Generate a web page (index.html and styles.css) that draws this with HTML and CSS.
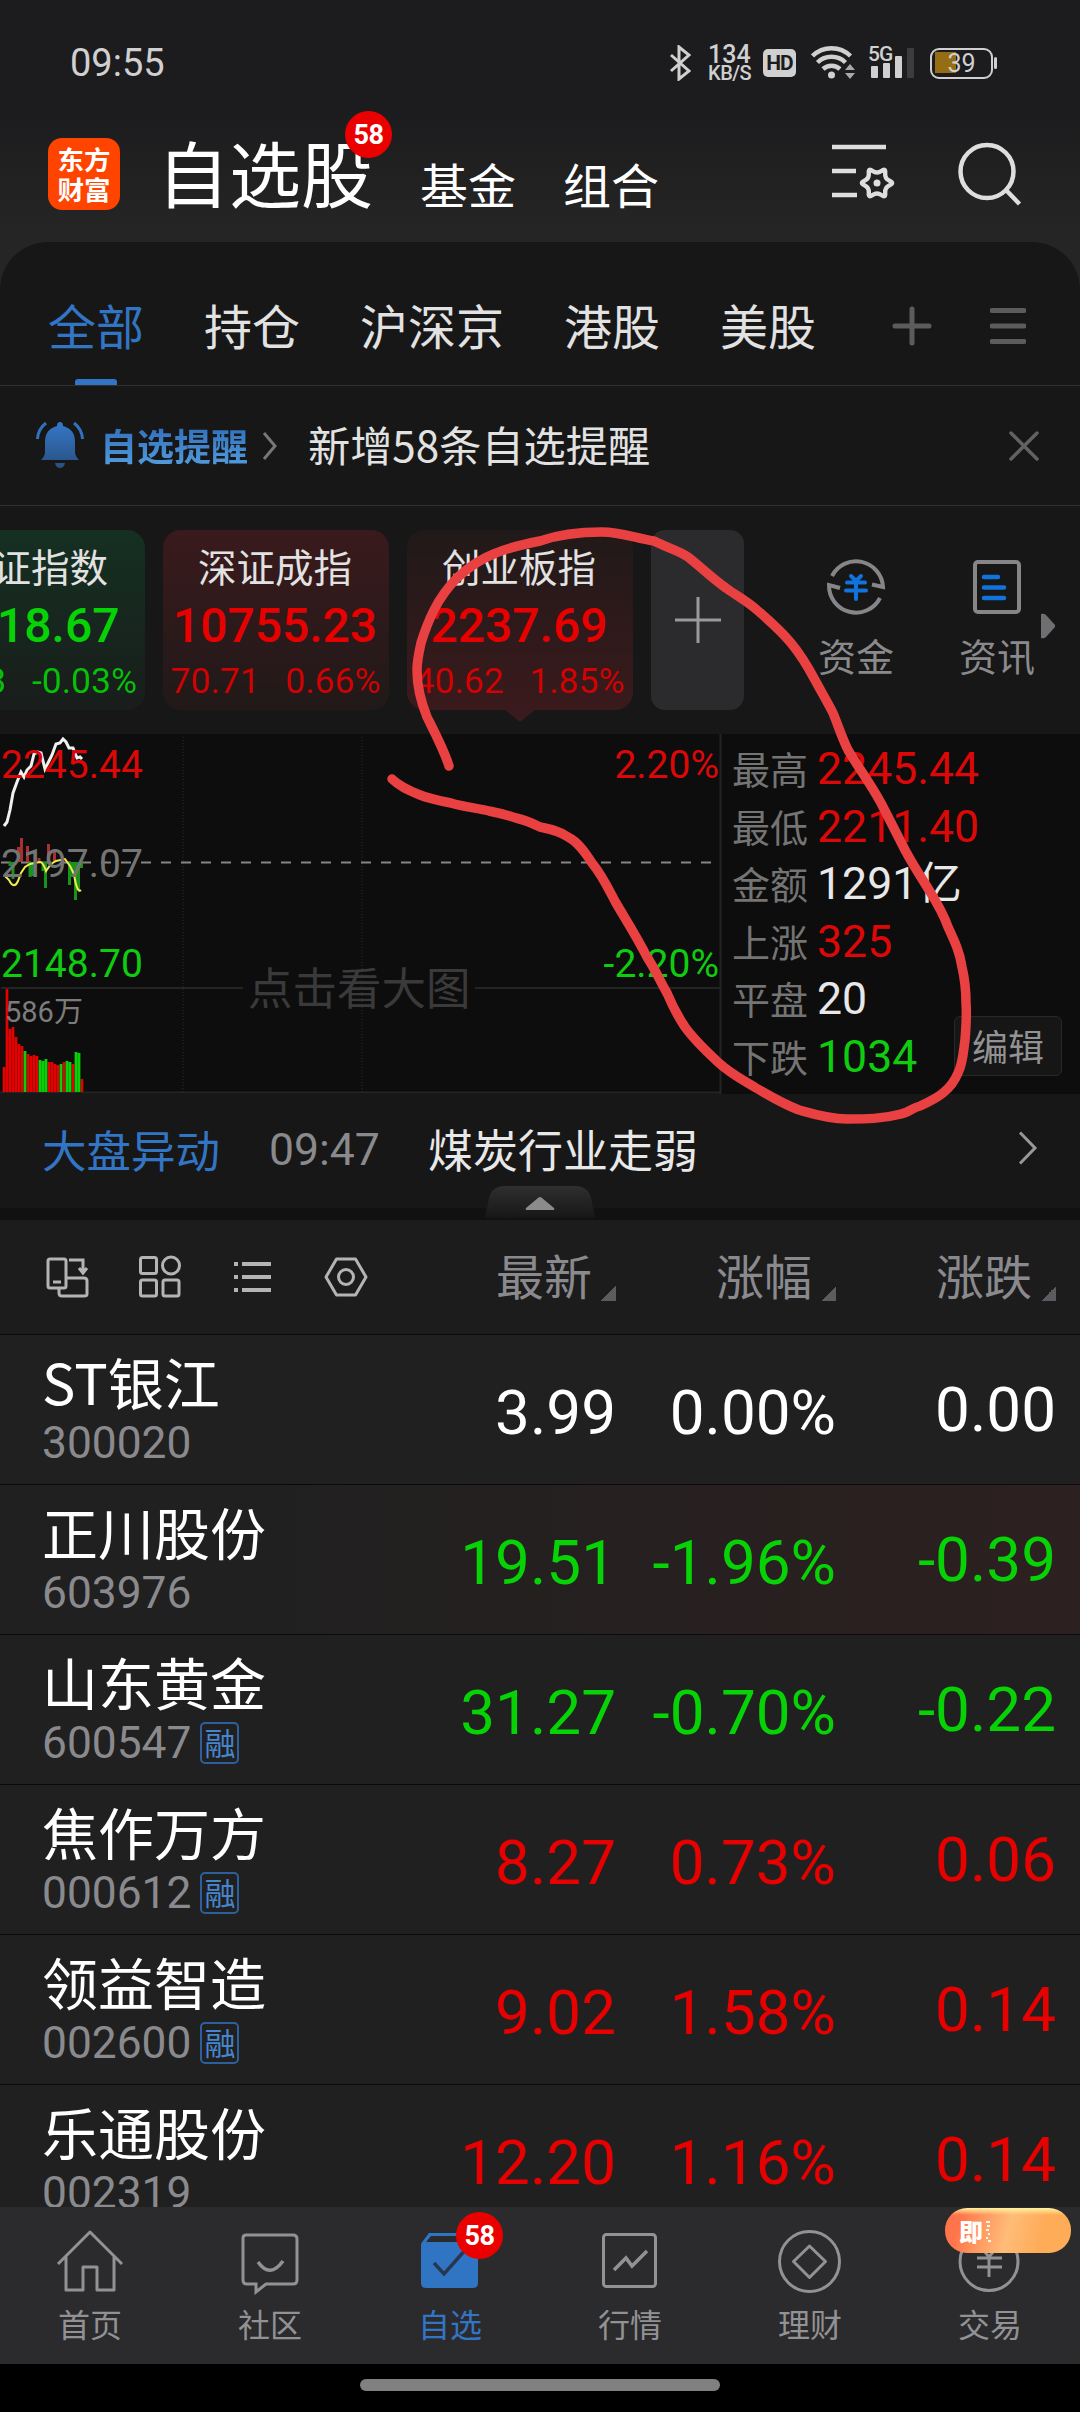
FILE: index.html
```html
<!DOCTYPE html>
<html lang="zh-CN">
<head>
    <meta charset="UTF-8">
    <meta name="viewport" content="width=device-width, initial-scale=1.0">
    <title>自选股</title>
    <link rel="stylesheet" href="styles.css">
</head>
<body>
    <div class="top">
        <div class="status-bar">
            <span class="time">09:55</span>
            <div class="status-icons">
                <svg class="bluetooth" width="22" height="36" viewBox="0 0 22 36" fill="none" stroke="#d0d0d0" stroke-width="3"><path d="M2 10l18 16-10 8V2l10 8L2 26"/></svg>
                <div class="speed"><span>134</span><span class="unit">KB/S</span></div>
                <div class="hd">HD</div>
                <svg class="wifi" width="46" height="36" viewBox="0 0 46 36" fill="none" stroke="#d0d0d0" stroke-width="4.5"><path d="M1.500 12a27 27 0 0 1 38 0M6.500 18.500a20 20 0 0 1 28 0M12 25a12.500 12.500 0 0 1 17 0"/><circle cx="20.500" cy="31" r="3.500" fill="#d0d0d0" stroke="none"/><path d="M34 26l5-6 5 6zM34 29h10l-5 6z" fill="#a8a8a8" stroke="none"/></svg>
                <div class="signal">
                    <span class="net">5G</span>
                    <svg width="46" height="34" viewBox="0 0 46 34" fill="#d0d0d0"><rect x="2" y="20" width="7" height="12" rx="1"/><rect x="14" y="17" width="7" height="15" rx="1"/><rect x="26" y="10" width="7" height="22" rx="1"/><rect x="38" y="2" width="7" height="30" rx="1" fill="#3c3c3e"/></svg>
                </div>
                <div class="battery"><span>39</span></div>
            </div>
        </div>
        <div class="header">
            <div class="logo">东方<br>财富</div>
            <div class="title">自选股<span class="badge">58</span></div>
            <div class="link">基金</div>
            <div class="link">组合</div>
            <div class="header-icons">
                <svg width="66" height="62" viewBox="0 0 66 62" fill="none" stroke="#dedede" stroke-width="4.500"><path d="M1 6h54M1 30h24M1 54h25"/><path transform="translate(46 42) scale(.88)" stroke-width="5" d="M14.300 2.500Q8.700 5 9.300 11.200 10 17.300 5 13.700 0 10-5 13.700-10 17.300-9.300 11.200-8.700 5-14.300 2.500-20 0-14.300-2.500-8.700-5-9.300-11.200-10-17.300-5-13.700 0-10 5-13.700 10-17.300 9.300-11.200 8.700-5 14.300-2.500 20 0 14.300 2.500z"/><circle cx="46" cy="42" r="3.500" fill="#dedede" stroke="none"/></svg>
                <svg width="66" height="66" viewBox="0 0 66 66" fill="none" stroke="#dedede" stroke-width="4.500"><circle cx="29" cy="30.500" r="26.500"/><path d="M48 49l13.500 14"/></svg>
            </div>
        </div>
    </div>

    <div class="panel">
        <div class="tabs">
            <span class="tab active">全部</span>
            <span class="tab">持仓</span>
            <span class="tab">沪深京</span>
            <span class="tab">港股</span>
            <span class="tab">美股</span>
            <svg class="tab-plus" width="40" height="40" viewBox="0 0 40 40" stroke="#5c5c5c" stroke-width="5" stroke-linecap="round"><path d="M3 20h34M20 3v34"/></svg>
            <svg width="36" height="40" viewBox="0 0 36 40" stroke="#5c5c5c" stroke-width="5" stroke-linecap="round"><path d="M2 4.500h32M2 20h32M2 35.500h32"/></svg>
        </div>

        <div class="notice">
            <svg class="bell" width="50" height="50" viewBox="0 0 50 50">
                <defs><linearGradient id="bell" x1="0" y1="0" x2="0" y2="1"><stop offset="0" stop-color="#3578c8"/><stop offset="1" stop-color="#285080"/></linearGradient></defs>
                <path d="M25 3q3 0 3 4 12 3 12 16v10q0 4 4 8H6q4-4 4-8V23Q10 10 22 7q0-4 3-4zM20 44h10q-1 5-5 5t-5-5z" fill="url(#bell)"/>
                <path d="M11 4Q3 10 2.500 20M39 4q8 6 8.500 16" fill="none" stroke="#3272bd" stroke-width="3"/>
            </svg>
            <span class="notice-title">自选提醒</span>
            <svg width="16" height="30" viewBox="0 0 16 30" fill="none" stroke="#77777a" stroke-width="3"><path d="M2 2l11 13L2 28"/></svg>
            <span class="notice-text">新增58条自选提醒</span>
            <svg class="close" width="32" height="32" viewBox="0 0 32 32" stroke="#626262" stroke-width="3.500" stroke-linecap="round"><path d="M3 3l26 26M29 3L3 29"/></svg>
        </div>

        <div class="indices">
            <div class="card down">
                <div class="card-name">上证指数</div>
                <div class="card-value">3218.67</div>
                <div class="card-change"><span>-0.98</span><span>-0.03%</span></div>
            </div>
            <div class="card up">
                <div class="card-name">深证成指</div>
                <div class="card-value">10755.23</div>
                <div class="card-change"><span>70.71</span><span>0.66%</span></div>
            </div>
            <div class="card up selected">
                <div class="card-name">创业板指</div>
                <div class="card-value">2237.69</div>
                <div class="card-change"><span>40.62</span><span>1.85%</span></div>
            </div>
            <div class="card-add"><svg width="46" height="46" viewBox="0 0 46 46" stroke="#9a9a9c" stroke-width="3"><path d="M0 23h46M23 0v46"/></svg></div>
            <div class="tool">
                <svg width="60" height="60" viewBox="0 0 60 60" fill="none" stroke="#868688" stroke-width="4"><path d="M6 19a27 27 0 0 1 51 11l-11-2.500M54 41A27 27 0 0 1 3 28l11 3"/><path d="M25 19l5 5 5-5M21 25.500h18M20 33.500h20M30 24v18" stroke="#1173dc" stroke-linecap="round"/></svg>
                <span>资金</span>
            </div>
            <div class="tool tool-news">
                <svg width="50" height="60" viewBox="0 0 50 60" fill="none" stroke="#868688" stroke-width="4"><rect x="3" y="5" width="44" height="50" rx="3"/><path d="M12 20h14M12 30.500h20M12 41h20" stroke="#1173dc" stroke-width="4.500" stroke-linecap="round"/></svg>
                <span>资讯</span>
            </div>
            <svg class="more" width="16" height="26" viewBox="0 0 16 26" fill="#6f6f71"><path d="M1 1q3-1 5 1l9 10v2L6 24q-2 2-5 1z"/></svg>
        </div>

        <div class="market">
            <svg class="chart" width="722" height="360" viewBox="0 0 722 360">
                <g stroke="#242424" stroke-width="2" fill="none">
                    <path d="M183 3v355M362 3v355" stroke="#1d1d1d" stroke-dasharray="1 2"/>
                    <path d="M1 254h242M475 254h246M0 358.500h721M720.500 0v360"/>
                </g>
                <path d="M1 128.500h714" stroke="#858585" stroke-width="2" stroke-dasharray="10 10"/>
                <!-- volume -->
                <path d="M4 358V333M7 358V255M10 358V295M13 358V293M16 358V303M19 358V310M22 358V312M28 358V320M31 358V322M34 358V321M37 358V322M49 358V328M52 358V328M55 358V330M58 358V331M64 358V328M73 358V330M82 358V345" stroke="#e60000" stroke-width="2.700"/>
                <path d="M25 358V317M40 358V326M43 358V327M46 358V325M61 358V330M67 358V327M70 358V328M76 358V318M79 358V319" stroke="#06d206" stroke-width="2.800"/>
                <!-- momentum bars -->
                <path d="M18.500 128V113M21.500 128V104M27.500 128V112M39 128V124M48.500 128V110M54.500 128V118" stroke="#a93030" stroke-width="3"/>
                <path d="M10 128v4M13 128v17M30 128v15M33 128v14M43 128v9M45.500 128v26M69.500 128v23M72.500 128v15M75.500 128v38M78.500 128v28M81.500 128v6" stroke="#199319" stroke-width="3"/>
                <path d="M4 92l3-4 3-12 3-17 4-11 4-10 3 5 3-7 4-4 3-12 4-2 3 1 4 16 3-6 4-8 4-11 4-1 3-4 3 3 3 6 4 0 4 10 3-1 2 2" fill="none" stroke="#f0f0f0" stroke-width="3"/>
                <path d="M4 141l5 5q5 10 9 1l3-8 4-6 5-3 10-2q3 0 6 9l5-7 5-3 9-2 5 7 4 8q3 20 7 16" fill="none" stroke="#f2ea4c" stroke-width="2"/>
                <g class="axis">
                    <text x="1" y="44" class="t-up">2245.44</text>
                    <text x="1" y="143" class="t-mid">2197.07</text>
                    <text x="1" y="243" class="t-down">2148.70</text>
                    <text x="719" y="44" text-anchor="end" class="t-up">2.20%</text>
                    <text x="719" y="243" text-anchor="end" class="t-down">-2.20%</text>
                    <text x="5" y="288" class="t-vol">586万</text>
                </g>
                <text x="248" y="271" class="hint">点击看大图</text>
            </svg>
            <div class="stats">
                <div class="stat"><span>最高</span><b class="t-up">2245.44</b></div>
                <div class="stat"><span>最低</span><b class="t-up">2211.40</b></div>
                <div class="stat"><span>金额</span><b>1291亿</b></div>
                <div class="stat"><span>上涨</span><b class="t-up">325</b></div>
                <div class="stat"><span>平盘</span><b>20</b></div>
                <div class="stat"><span>下跌</span><b class="t-down">1034</b></div>
                <div class="edit">编辑</div>
            </div>
        </div>

        <div class="news">
            <span class="news-tag">大盘异动</span>
            <span class="news-time">09:47</span>
            <span class="news-text">煤炭行业走弱</span>
            <svg class="news-arrow" width="20" height="34" viewBox="0 0 20 34" fill="none" stroke="#98989a" stroke-width="3"><path d="M2 1.500l15 15.500L2 32.500"/></svg>
            <svg class="handle" width="110" height="32" viewBox="0 0 110 32">
                <defs><linearGradient id="tab" x1="0" y1="0" x2="0" y2="1"><stop offset="0" stop-color="#2f2f2f"/><stop offset="1" stop-color="#171717"/></linearGradient></defs>
                <path d="M0 32L4 12Q7 0 20 0h70q13 0 16 12l4 20z" fill="url(#tab)"/>
                <path d="M55 11q1 0 2 1l12 10q1 2-1 2H42q-2 0-1-2l12-10q1-1 2-1z" fill="#8b8b8b"/>
            </svg>
        </div>
    </div>

    <div class="table-head">
        <div class="views">
            <svg width="44" height="44" viewBox="0 0 44 44" fill="none" stroke="#b4b4b4" stroke-width="3"><rect x="3" y="4" width="18" height="29" rx="2"/><path d="M8 27h8M24 5h14v12M34 13l4 5 4-5M21 23h18q3 0 3 3v13q0 2-3 2H17q-3 0-3-3v-4"/></svg>
            <svg width="44" height="44" viewBox="0 0 44 44" fill="none" stroke="#b4b4b4" stroke-width="3"><rect x="2.500" y="2.500" width="16" height="16" rx="2"/><circle cx="33" cy="10.500" r="8.500"/><rect x="2.500" y="25" width="16" height="16" rx="2"/><rect x="25" y="25" width="16" height="16" rx="2"/></svg>
            <svg width="44" height="44" viewBox="0 0 44 44" fill="none" stroke="#b4b4b4" stroke-width="4"><path d="M3 9h4M11 9h29M3 22h4M11 22h29M3 35h4M11 35h29"/></svg>
            <svg width="44" height="44" viewBox="0 0 44 44" fill="none" stroke="#b4b4b4" stroke-width="3" stroke-linejoin="round"><path d="M12.500 4h19l10.500 18-10.500 18h-19L2 22z"/><circle cx="22" cy="22" r="7.500"/></svg>
        </div>
        <div class="col">最新<i></i></div>
        <div class="col">涨幅<i></i></div>
        <div class="col">涨跌<i></i></div>
    </div>

    <div class="list">
        <div class="row">
            <div class="stock"><div class="name">ST银江</div><div class="code">300020</div></div>
            <div class="num">3.99</div><div class="num">0.00%</div><div class="num diff">0.00</div>
        </div>
        <div class="row flash fall">
            <div class="stock"><div class="name">正川股份</div><div class="code">603976</div></div>
            <div class="num">19.51</div><div class="num">-1.96%</div><div class="num diff">-0.39</div>
        </div>
        <div class="row fall">
            <div class="stock"><div class="name">山东黄金</div><div class="code">600547<em>融</em></div></div>
            <div class="num">31.27</div><div class="num">-0.70%</div><div class="num diff">-0.22</div>
        </div>
        <div class="row rise">
            <div class="stock"><div class="name">焦作万方</div><div class="code">000612<em>融</em></div></div>
            <div class="num">8.27</div><div class="num">0.73%</div><div class="num diff">0.06</div>
        </div>
        <div class="row rise">
            <div class="stock"><div class="name">领益智造</div><div class="code">002600<em>融</em></div></div>
            <div class="num">9.02</div><div class="num">1.58%</div><div class="num diff">0.14</div>
        </div>
        <div class="row rise">
            <div class="stock"><div class="name">乐通股份</div><div class="code">002319</div></div>
            <div class="num">12.20</div><div class="num">1.16%</div><div class="num diff">0.14</div>
        </div>
    </div>

    <div class="nav">
        <div class="nav-item">
            <svg width="68" height="68" viewBox="0 0 68 68" fill="none" stroke="#929295" stroke-width="3"><path d="M2 37L34 5l32 32M10 30v33h17V40h14v23h17V30" stroke-linejoin="round"/></svg>
            <span>首页</span>
        </div>
        <div class="nav-item">
            <svg width="68" height="68" viewBox="0 0 68 68" fill="none" stroke="#929295" stroke-width="3"><path d="M10 8h47q4 0 4 4v41q0 4-4 4H30l-10 8v-8h-9q-4 0-4-4V11q0-3 3-3z"/><path d="M22 35q12 17 25-1" stroke-width="3.500"/></svg>
            <span>社区</span>
        </div>
        <div class="nav-item current">
            <svg width="68" height="68" viewBox="0 0 68 68"><path d="M5 18q0-2 2-4l6-8h42l7 10v40q0 5-5 5H10q-5 0-5-5zM10 15h47l-5-6H15z" fill="#3075c4" fill-rule="evenodd"/><path d="M18 36l10 11 23-26" fill="none" stroke="#263850" stroke-width="3.500"/></svg>
            <span>自选</span>
            <span class="badge">58</span>
        </div>
        <div class="nav-item">
            <svg width="68" height="68" viewBox="0 0 68 68" fill="none" stroke="#929295" stroke-width="3"><rect x="7.500" y="7.500" width="52" height="52" rx="3"/><path d="M18 43l12-12 6 8 15-15" stroke-width="3.500"/></svg>
            <span>行情</span>
        </div>
        <div class="nav-item">
            <svg width="68" height="68" viewBox="0 0 68 68" fill="none" stroke="#929295" stroke-width="3"><circle cx="33.500" cy="34.500" r="30"/><path d="M33.500 19l16 15.500-16 16-16-16z" stroke-linejoin="round"/></svg>
            <span>理财</span>
        </div>
        <div class="nav-item">
            <svg width="68" height="68" viewBox="0 0 68 68" fill="none" stroke="#929295" stroke-width="3"><circle cx="33" cy="34.500" r="29"/><path d="M24 19l9 11 9-11M21 31h25M21 40h25M33 30v20"/></svg>
            <span>交易</span>
            <div class="promo"><span>即</span><svg width="6" height="22" viewBox="0 0 6 22" stroke="#fff5ea" stroke-width="2"><path d="M1 2h4M2 6h3M1 10h3M3 14h2M1 18h2M3 21h3"/></svg></div>
        </div>
    </div>
    <div class="home-bar"><div></div></div>

    <!-- freehand marker drawn over the page -->
    <svg class="marker" width="1080" height="2412" viewBox="0 0 1080 2412">
        <path d="M449 766C444 750 435 733 427 717C421 702 417 686 417 670C417 662 419 652 421 643C425 630 429 620 434 610C440 598 448 587 458 577C470 566 483 558 496 553C510 547 525 544 540 541C560 534 580 532 602 532C620 532 635 538 654 541C668 548 680 551 688 557C702 568 713 579 726 588C737 596 747 601 757 610C771 622 782 632 791 643C801 655 808 667 815 680C822 693 828 703 833 713C838 725 842 738 848 750C858 767 870 783 881 803L905 850C913 865 921 877 929 890C937 903 944 915 948 927C955 942 960 953 962 967C965 980 966 990 966 1003C967 1016 966 1028 965 1040C963 1054 963 1063 958 1073C951 1090 938 1098 920 1106C912 1108 908 1113 901 1114C882 1119 866 1119 847 1119C829 1119 813 1114 799 1110C783 1104 770 1096 756 1088C743 1080 731 1074 719 1063C706 1051 695 1041 685 1027C677 1015 672 1005 667 993C660 981 655 969 647 957C637 937 626 920 616 903C608 888 602 875 592 863C585 852 578 842 568 837C560 831 550 829 540 827C532 823 525 820 516 818C507 815 499 813 489 811C477 808 464 807 451 803C441 801 430 799 420 795C408 790 399 786 392 779"/>
    </svg>
</body>
</html>
```
FILE: styles.css
```css
* {
    margin: 0;
    padding: 0;
    box-sizing: border-box;
}
body {
    width: 1080px;
    height: 2412px;
    overflow: hidden;
    position: relative;
    background: #000;
    color: #e2e2e2;
    font-family: "Noto Sans CJK SC", sans-serif;
    display: flex;
    flex-direction: column;
}
svg {
    display: block;
    flex-shrink: 0;
}

/* status bar and title */
.top {
    height: 290px;
    margin-bottom: -48px;
    background: linear-gradient(#1c1c1e 110px, #252525 230px);
}
.status-bar {
    height: 126px;
    padding: 0 87px 0 70px;
    display: flex;
    align-items: center;
    justify-content: space-between;
    font-family: Roboto, sans-serif;
    color: #d0d0d0;
}
.time {
    font-size: 38px;
}
.status-icons {
    display: flex;
    align-items: center;
}
.speed {
    display: flex;
    flex-direction: column;
    width: 43px;
    margin-left: 17px;
    font-size: 25px;
    line-height: 19px;
    font-weight: 500;
}
.speed .unit {
    font-size: 20px;
    line-height: 18px;
    letter-spacing: -0.5px;
}
.hd {
    width: 33px;
    height: 28px;
    margin-left: 12px;
    border-radius: 5px;
    background: #d0d0d0;
    color: #1c1c1e;
    font-size: 21px;
    line-height: 28px;
    font-weight: 700;
    text-align: center;
    letter-spacing: -1px;
}
.wifi {
    margin: -3px 0 0 15px;
}
.signal {
    position: relative;
    margin-left: 12px;
}
.net {
    position: absolute;
    left: -1px;
    top: 0;
    font-size: 21px;
    line-height: 16px;
    font-weight: 500;
    letter-spacing: -1px;
}
.battery {
    position: relative;
    width: 63px;
    height: 31px;
    margin-left: 15px;
    border: 2.5px solid #d0d0d0;
    border-radius: 9px;
    font-size: 25px;
    line-height: 27px;
    text-align: center;
    background: linear-gradient(90deg, #946d14 21px, transparent 21px) 3px 2.5px / 53px 21px no-repeat;
}
.battery::after {
    content: "";
    position: absolute;
    right: -6px;
    top: 7px;
    width: 3px;
    height: 12px;
    border-radius: 2px;
    background: #d0d0d0;
}
.header {
    height: 116px;
    padding: 0 56px 0 48px;
    display: flex;
    align-items: flex-start;
}
.logo {
    width: 72px;
    height: 72px;
    margin-top: 12px;
    padding-top: 6px;
    border-radius: 14px;
    background: #ff4400;
    color: #fff;
    font-size: 26.500px;
    line-height: 30px;
    font-weight: 700;
    text-align: center;
}
.title {
    position: relative;
    margin-left: 37px;
    color: #fff;
    font-size: 72px;
    line-height: 90px;
}
.badge {
    position: absolute;
    left: 188px;
    top: -15px;
    width: 47px;
    height: 47px;
    border-radius: 50%;
    background: #eb0000;
    color: #fff;
    font-family: Roboto, sans-serif;
    font-size: 27px;
    line-height: 48px;
    font-weight: 700;
    text-align: center;
    letter-spacing: -0.5px;
}
.link {
    margin-left: 47px;
    color: #fff;
    font-size: 48px;
    line-height: 60px;
    padding-top: 27px;
}
.header-icons {
    display: flex;
    gap: 61px;
    margin: 15px 0 0 auto;
}

/* rounded dark panel */
.panel {
    background: #171717;
    border-radius: 48px 48px 0 0;
    height: 978px;
    position: relative;
}
.tabs {
    height: 144px;
    padding: 24px 54px 0 48px;
    border-bottom: 1px solid #303030;
    display: flex;
    align-items: center;
    gap: 60px;
    font-size: 48px;
}
.tab {
    height: 119px;
    line-height: 116px;
    position: relative;
}
.tab.active {
    color: #3275c4;
}
.tab.active::after {
    content: "";
    position: absolute;
    left: 27px;
    bottom: 0;
    width: 42px;
    height: 6px;
    border-radius: 3px 3px 0 0;
    background: #3275c4;
}
.tab-plus {
    margin: 0 -2px 0 auto;
}
.notice {
    height: 120px;
    padding: 0 40px 0 35px;
    border-bottom: 1px solid #303030;
    display: flex;
    align-items: center;
}
.bell {
    margin-top: -4px;
}
.notice-title {
    margin: -2px 14px 0 15px;
    font-size: 37px;
    line-height: 50px;
    font-weight: 700;
    background: linear-gradient(#2b69b8, #55a0e0);
    -webkit-background-clip: text;
    background-clip: text;
    color: transparent;
}
.notice-text {
    margin: -4px 0 0 30px;
    font-size: 42.200px;
}
.close {
    margin-left: auto;
}
.indices {
    height: 228px;
    padding-top: 24px;
    display: flex;
    overflow: hidden;
}
.card {
    flex: 0 0 226px;
    height: 180px;
    margin-right: 18px;
    border-radius: 18px;
    text-align: center;
    position: relative;
}
.card:first-child {
    margin-left: -81px;
}
.card-name {
    font-size: 38.500px;
    line-height: 50px;
    padding: 10px 2px 0 0;
}
.card-value {
    font-family: Roboto, sans-serif;
    font-size: 48px;
    line-height: 60px;
    font-weight: 500;
    margin-top: 6px;
    padding-right: 2px;
}
.card-change {
    display: flex;
    justify-content: space-between;
    padding: 0 8px;
    font-family: Roboto, sans-serif;
    font-size: 35.500px;
    line-height: 50px;
}
.card.up {
    background: linear-gradient(#3a1a1c, #211919);
    color: #e60000;
}
.card.down {
    background: linear-gradient(#153022, #191d1b);
    color: #06d206;
}
.card.selected {
    background: linear-gradient(#211919, #3a1a1c);
}
.card.selected::after {
    content: "";
    position: absolute;
    left: 98px;
    top: 180px;
    border: 15px solid transparent;
    border-top: 12px solid #3a1a1c;
    border-bottom: 0;
}
.card .card-name {
    color: #e2e2e2;
}
.card-change {
    opacity: 0.9;
}
.card-add {
    flex: 0 0 93px;
    height: 180px;
    border-radius: 14px;
    background: #2b2b2d;
    display: flex;
    align-items: center;
    justify-content: center;
}
.tool {
    width: 78px;
    margin-left: 73px;
    padding-top: 27px;
    display: flex;
    flex-direction: column;
    align-items: center;
    font-size: 38px;
    line-height: 50px;
    color: #8a8a8d;
    white-space: nowrap;
}
.tool span {
    padding-top: 13px;
}
.tool-news {
    margin-left: 63px;
}
.more {
    margin: 83px 0 0 4px;
}

/* intraday chart and stats */
.market {
    height: 360px;
    display: flex;
    background: #0d0d0d;
}
.axis {
    font-family: Roboto, "Noto Sans CJK SC", sans-serif;
    font-size: 39px;
}
.t-up {
    fill: #dc0808;
    color: #dc0808;
}
.t-down {
    fill: #10cc10;
    color: #10cc10;
}
.t-mid {
    fill: #747474;
}
.t-vol {
    fill: #7c7c7c;
    font-size: 29px;
}
.hint {
    fill: #3a3a3a;
    font-size: 44.500px;
}
.stats {
    flex: 1;
    padding: 7px 0 0 10px;
    position: relative;
}
.stat {
    height: 57.500px;
    display: flex;
    align-items: center;
    font-size: 38px;
    line-height: 57px;
    color: #747474;
}
.stat span {
    margin-top: -4px;
}
.stat b {
    margin-left: 9px;
    font-family: Roboto, "Noto Sans CJK SC", sans-serif;
    font-size: 44.600px;
    font-weight: 400;
    color: #e8e8e8;
}
.stat b.t-up {
    color: #dc0808;
}
.stat b.t-down {
    color: #10cc10;
}
.edit {
    position: absolute;
    right: 18px;
    bottom: 18px;
    width: 108px;
    height: 60px;
    border: 1px solid #282828;
    border-radius: 6px;
    background: #161616;
    color: #929294;
    font-size: 36px;
    line-height: 57px;
    text-align: center;
}
.news {
    height: 126px;
    padding: 0 42px 5px 42px;
    border-bottom: 12px solid #111;
    display: flex;
    align-items: center;
    position: relative;
}
.news-tag {
    font-size: 44.500px;
    color: #3275c4;
}
.news-time {
    width: 113px;
    margin: 3px 0 0 49px;
    font-family: Roboto, sans-serif;
    font-size: 44.500px;
    color: #8a8a8d;
}
.news-text {
    margin-left: 46px;
    font-size: 45px;
    color: #e8e8e8;
}
.news-arrow {
    margin: -2px 0 0 auto;
}
.handle {
    position: absolute;
    left: 485px;
    top: 92px;
}

/* watch list */
.table-head {
    height: 114px;
    padding-left: 45px;
    display: grid;
    grid-template-columns: 351px 220px 220px 220px;
    align-items: center;
    background: #1c1c1c;
    color: #8a8a8e;
    font-size: 48px;
}
.views {
    display: flex;
    gap: 49px;
}
.col {
    height: 60px;
    line-height: 66px;
    display: flex;
    justify-content: flex-end;
    align-items: flex-end;
    gap: 9px;
}
.col i {
    width: 15px;
    height: 15px;
    margin-bottom: 6px;
    background: linear-gradient(135deg, transparent 50%, #5c5c60 50%);
}
.list {
    height: 873px;
    overflow: hidden;
    background: #202020;
}
.row {
    height: 150px;
    padding-left: 42px;
    border-top: 1px solid #0b0b0b;
    display: grid;
    grid-template-columns: 354px 220px 220px 220px;
    align-items: center;
    color: #fff;
}
.row.flash {
    background: linear-gradient(90deg, #202020 20%, #2d2020);
}
.name {
    margin-top: -7px;
    font-size: 56px;
    line-height: 70px;
    color: #fff;
}
.code {
    display: flex;
    align-items: center;
    height: 46px;
    margin-top: 4px;
    font-family: Roboto, sans-serif;
    font-size: 44.300px;
    color: #8a8a8e;
}
.code em {
    width: 39px;
    height: 42px;
    margin-left: 9px;
    border: 2px solid #2c5f9c;
    border-radius: 5px;
    font-family: "Noto Sans CJK SC", sans-serif;
    font-size: 31px;
    line-height: 36px;
    font-style: normal;
    text-align: center;
    color: #4686cf;
}
.num {
    font-family: Roboto, sans-serif;
    font-size: 62px;
    text-align: right;
    padding-top: 5px;
}
.diff {
    padding-top: 0;
    margin-top: -1px;
}
.rise .num {
    color: #e60000;
}
.fall .num {
    color: #06d206;
}

/* bottom navigation */
.nav {
    height: 157px;
    display: flex;
    background: #2b2b2d;
}
.nav-item {
    width: 180px;
    padding-top: 20px;
    display: flex;
    flex-direction: column;
    align-items: center;
    position: relative;
    font-size: 32px;
    line-height: 50px;
    color: #929295;
}
.nav-item span {
    padding-top: 3px;
}
.nav-item.current {
    color: #3275c4;
}
.nav-item .badge {
    left: 96px;
    top: 5px;
    padding: 0;
}
.promo {
    position: absolute;
    left: 45px;
    top: 1px;
    width: 126px;
    height: 45px;
    padding-left: 14px;
    border-radius: 22px;
    background: linear-gradient(#fff3a0, transparent 7px), linear-gradient(105deg, #ff744a 12%, #ffa166 35%, #ffbc78 50%, #ffac58 75%);
    color: #fff;
    display: flex;
    align-items: center;
    gap: 2px;
}
.promo span {
    padding: 0;
    font-size: 24px;
    line-height: 40px;
    font-weight: 900;
}
.home-bar {
    height: 48px;
    padding-top: 15px;
    display: flex;
    justify-content: center;
    align-items: flex-start;
}
.home-bar div {
    width: 360px;
    height: 12px;
    border-radius: 6px;
    background: #808080;
}
.marker {
    position: absolute;
    left: 0;
    top: 0;
}
.marker path {
    fill: none;
    stroke: #e94141;
    stroke-width: 9.500;
    stroke-linecap: round;
    stroke-linejoin: round;
}
```
